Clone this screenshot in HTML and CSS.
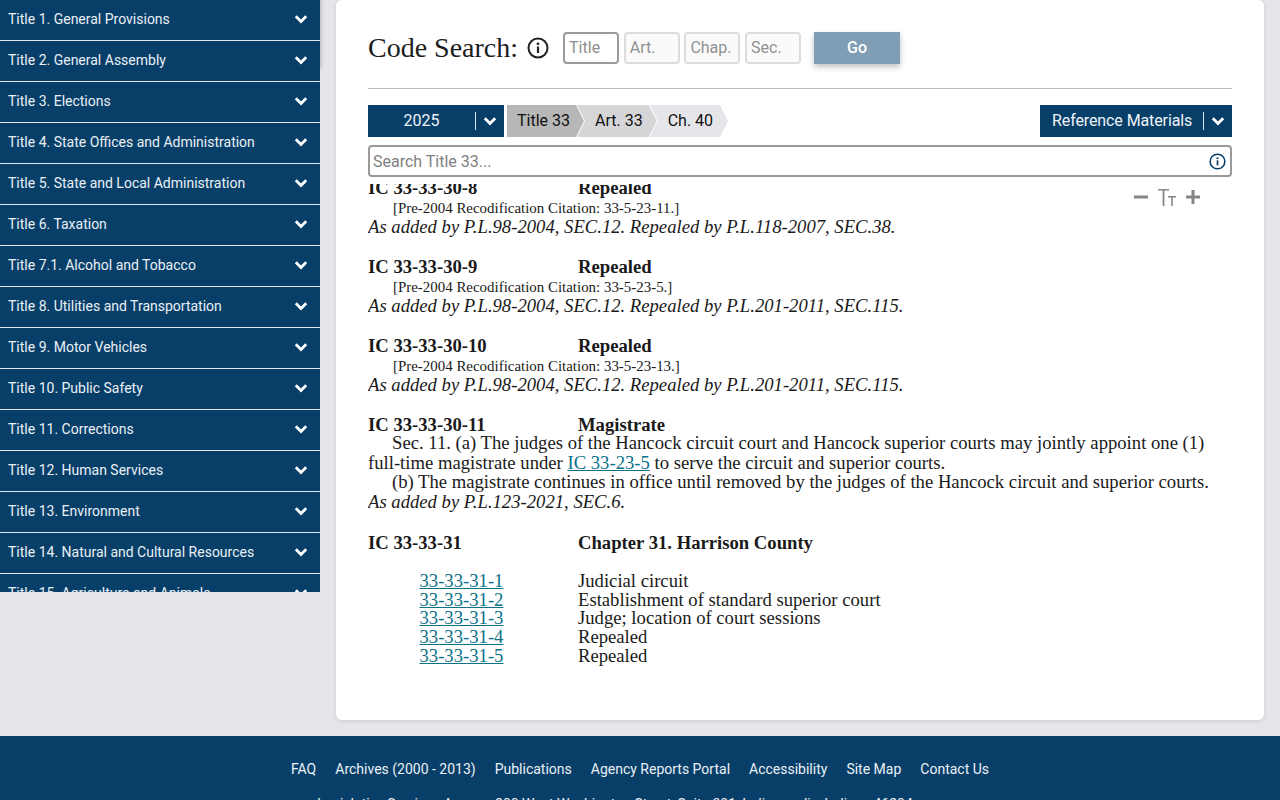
FILE: index.html
```html
<!DOCTYPE html>
<html lang="en">
<head>
    <meta charset="UTF-8">
    <meta name="viewport" content="width=device-width, initial-scale=1.0">
    <title>Indiana Code</title>
    <link rel="stylesheet" href="styles.css">
</head>
<body>
    <svg class="icon-defs" width="0" height="0">
        <symbol id="chev" viewBox="0 0 14 10">
            <path d="M1.8 2.2 7 7.4l5.2-5.2" fill="none" stroke="currentColor" stroke-width="2.8"/>
        </symbol>
        <symbol id="info" viewBox="0 0 22 22">
            <circle cx="11" cy="11" r="9.5" fill="none" stroke="currentColor" stroke-width="2"/>
            <rect x="9.9" y="9.5" width="2.2" height="6.5" fill="currentColor"/>
            <circle cx="11" cy="6.8" r="1.4" fill="currentColor"/>
        </symbol>
    </svg>

    <div class="page">
        <nav class="sidebar">
            <div class="nav-item"><span>Title 1. General Provisions</span><svg class="chev"><use href="#chev"/></svg></div>
            <div class="nav-item"><span>Title 2. General Assembly</span><svg class="chev"><use href="#chev"/></svg></div>
            <div class="nav-item"><span>Title 3. Elections</span><svg class="chev"><use href="#chev"/></svg></div>
            <div class="nav-item"><span>Title 4. State Offices and Administration</span><svg class="chev"><use href="#chev"/></svg></div>
            <div class="nav-item"><span>Title 5. State and Local Administration</span><svg class="chev"><use href="#chev"/></svg></div>
            <div class="nav-item"><span>Title 6. Taxation</span><svg class="chev"><use href="#chev"/></svg></div>
            <div class="nav-item"><span>Title 7.1. Alcohol and Tobacco</span><svg class="chev"><use href="#chev"/></svg></div>
            <div class="nav-item"><span>Title 8. Utilities and Transportation</span><svg class="chev"><use href="#chev"/></svg></div>
            <div class="nav-item"><span>Title 9. Motor Vehicles</span><svg class="chev"><use href="#chev"/></svg></div>
            <div class="nav-item"><span>Title 10. Public Safety</span><svg class="chev"><use href="#chev"/></svg></div>
            <div class="nav-item"><span>Title 11. Corrections</span><svg class="chev"><use href="#chev"/></svg></div>
            <div class="nav-item"><span>Title 12. Human Services</span><svg class="chev"><use href="#chev"/></svg></div>
            <div class="nav-item"><span>Title 13. Environment</span><svg class="chev"><use href="#chev"/></svg></div>
            <div class="nav-item"><span>Title 14. Natural and Cultural Resources</span><svg class="chev"><use href="#chev"/></svg></div>
            <div class="nav-item"><span>Title 15. Agriculture and Animals</span><svg class="chev"><use href="#chev"/></svg></div>
        </nav>

        <main class="card">
            <div class="search-row">
                <h1>Code Search:</h1>
                <svg class="info-big"><use href="#info"/></svg>
                <div class="code-inputs">
                    <input class="code-input active" placeholder="Title">
                    <input class="code-input" placeholder="Art.">
                    <input class="code-input" placeholder="Chap.">
                    <input class="code-input" placeholder="Sec.">
                </div>
                <button class="go">Go</button>
            </div>

            <div class="toolbar">
                <div class="drop year"><span class="drop-label">2025</span><i class="sep"></i><svg class="chev"><use href="#chev"/></svg></div>
                <div class="crumbs">
                    <a class="crumb c1">Title 33</a>
                    <a class="crumb c2">Art. 33</a>
                    <a class="crumb c3">Ch. 40</a>
                </div>
                <div class="drop refs"><span class="drop-label">Reference Materials</span><i class="sep"></i><svg class="chev"><use href="#chev"/></svg></div>
            </div>

            <div class="text-search">
                <input placeholder="Search Title 33...">
                <svg class="info-small"><use href="#info"/></svg>
            </div>

            <div class="code-view">
                <div class="font-tools">
                    <svg width="16" height="16" viewBox="0 0 16 16"><rect x="1" y="6.5" width="14" height="3" fill="currentColor"/></svg>
                    <svg width="20" height="20" viewBox="0 0 20 20"><path d="M1 2h11v1.600H7.400V19H5.600V3.600H1zM11 9h8v1.400h-3.200V19h-1.600v-8.600H11z" fill="currentColor"/></svg>
                    <svg width="16" height="16" viewBox="0 0 16 16"><path d="M6.500 1h3v5.500H15v3H9.500V15h-3V9.500H1v-3h5.500z" fill="currentColor"/></svg>
                </div>
                <div class="code-text">
                    <div class="sec-head"><b>IC 33-33-30-8</b><b>Repealed</b></div>
                    <div class="cite">[Pre-2004 Recodification Citation: 33-5-23-11.]</div>
                    <div class="hist">As added by P.L.98-2004, SEC.12. Repealed by P.L.118-2007, SEC.38.</div>

                    <div class="sec-head gap"><b>IC 33-33-30-9</b><b>Repealed</b></div>
                    <div class="cite">[Pre-2004 Recodification Citation: 33-5-23-5.]</div>
                    <div class="hist">As added by P.L.98-2004, SEC.12. Repealed by P.L.201-2011, SEC.115.</div>

                    <div class="sec-head gap"><b>IC 33-33-30-10</b><b>Repealed</b></div>
                    <div class="cite">[Pre-2004 Recodification Citation: 33-5-23-13.]</div>
                    <div class="hist">As added by P.L.98-2004, SEC.12. Repealed by P.L.201-2011, SEC.115.</div>

                    <div class="sec-head tight"><b>IC 33-33-30-11</b><b>Magistrate</b></div>
                    <p class="para">Sec. 11. (a) The judges of the Hancock circuit court and Hancock superior courts may jointly appoint one (1) full-time magistrate under <a href="#">IC 33-23-5</a> to serve the circuit and superior courts.</p>
                    <p class="para">(b) The magistrate continues in office until removed by the judges of the Hancock circuit and superior courts.</p>
                    <div class="hist">As added by P.L.123-2021, SEC.6.</div>

                    <div class="sec-head chapter"><b>IC 33-33-31</b><b>Chapter 31. Harrison County</b></div>

                    <ul class="toc">
                        <li><a href="#">33-33-31-1</a><span>Judicial circuit</span></li>
                        <li><a href="#">33-33-31-2</a><span>Establishment of standard superior court</span></li>
                        <li><a href="#">33-33-31-3</a><span>Judge; location of court sessions</span></li>
                        <li><a href="#">33-33-31-4</a><span>Repealed</span></li>
                        <li><a href="#">33-33-31-5</a><span>Repealed</span></li>
                    </ul>
                </div>
            </div>
        </main>
    </div>

    <footer class="footer">
        <div class="footer-links">
            <a>FAQ</a>
            <a>Archives (2000 - 2013)</a>
            <a>Publications</a>
            <a>Agency Reports Portal</a>
            <a>Accessibility</a>
            <a>Site Map</a>
            <a>Contact Us</a>
        </div>
        <div class="footer-note">Legislative Services Agency, 200 West Washington Street, Suite 301, Indianapolis, Indiana 46204</div>
    </footer>
</body>
</html>
```

FILE: styles.css
```css
:root {
    --navy: #083f69;
    --page-bg: #e6e6ea;
    --link: #0b7189;
}

* {
    margin: 0;
    padding: 0;
    box-sizing: border-box;
}

html, body {
    height: 800px;
    overflow: hidden;
}

body {
    background: var(--page-bg);
    font-family: Roboto, sans-serif;
}

.icon-defs {
    position: absolute;
}

.page {
    position: relative;
    display: flex;
    align-items: flex-start;
    gap: 16px;
    height: 736px;
}

/* faint shadow at the top of the nav, under the sidebar itself */
.page::before {
    content: '';
    position: absolute;
    top: -6px;
    left: 0;
    width: 320px;
    height: 74px;
    box-shadow: 1px 0 4px rgba(0, 0, 0, 0.22);
}

/* left nav */
.sidebar {
    position: relative;
    width: 320px;
    height: 592px;
    overflow: hidden;
    flex-shrink: 0;
    background: var(--navy);
}

.nav-item {
    display: flex;
    justify-content: space-between;
    align-items: center;
    height: 41px;
    padding: 0 12px 3px 8px;
    border-bottom: 1px solid #dfe8ef;
    color: #eaf0f5;
    font-size: 14px;
}

.chev {
    width: 14px;
    height: 10px;
    color: #fff;
}

/* main card */
.card {
    position: relative;
    width: 928px;
    height: 720px;
    padding: 32px 32px 0;
    background: #fff;
    border-radius: 6px;
    box-shadow: 0 1px 4px rgba(0, 0, 0, 0.12);
}

.search-row {
    display: flex;
    align-items: center;
    height: 57px;
    padding-bottom: 25px;
    border-bottom: 1px solid #bcbcbc;
}

.search-row h1 {
    font-family: "Liberation Serif", serif;
    font-size: 28px;
    font-weight: 400;
    color: #1c1c1c;
}

.info-big {
    width: 22px;
    height: 22px;
    margin-left: 9px;
    color: #222;
}

.code-inputs {
    display: flex;
    gap: 4.67px;
    margin-left: 14px;
}

.code-input {
    width: 56px;
    height: 32px;
    padding: 0 4px;
    border: 2px solid #dcdcdc;
    border-radius: 4px;
    background: #fafafa;
    font: 16px Roboto, sans-serif;
}

.code-input.active {
    border-color: #9a9a9a;
    background: #fff;
}

.code-input::placeholder {
    color: #909090;
}

.go {
    width: 86px;
    height: 32px;
    margin-left: 13px;
    border: none;
    background: #7f9db5;
    color: #fff;
    font: 500 16px Roboto, sans-serif;
    box-shadow: 0 3px 6px rgba(0, 0, 0, 0.25);
}

/* year, breadcrumb, reference bar */
.toolbar {
    display: flex;
    align-items: center;
    height: 32px;
    margin-top: 16px;
}

.drop {
    display: flex;
    align-items: center;
    height: 32px;
    background: var(--navy);
    color: #eef3f7;
    font-size: 16px;
}

.drop-label {
    margin-top: -2px;
}

.year {
    width: 136px;
}

.year .drop-label {
    width: 107px;
    text-align: center;
}

.refs {
    margin-left: auto;
    width: 192px;
    padding-left: 12px;
}

.refs .drop-label {
    width: 151px;
    letter-spacing: -0.1px;
}

.sep {
    width: 1px;
    height: 18px;
    background: #dfe8ef;
}

.drop .chev {
    margin-left: 7px;
}

.crumbs {
    display: flex;
    margin-left: 3px;
    font-size: 16px;
    color: #111;
}

.crumb {
    display: block;
    height: 32px;
    line-height: 31px;
    clip-path: polygon(0 0, calc(100% - 8px) 0, 100% 50%, calc(100% - 8px) 100%, 0 100%, 8px 50%);
}

.c1 {
    padding: 0 14px 0 10px;
    background: #b7b7b7;
    clip-path: polygon(0 0, calc(100% - 8px) 0, 100% 50%, calc(100% - 8px) 100%, 0 100%);
}

.c2 {
    margin-left: -7px;
    padding: 0 14px 0 18px;
    background: #d6d6d8;
}

.c3 {
    margin-left: -7px;
    padding: 0 15px 0 18px;
    background: #e6e6ea;
}

.text-search {
    position: relative;
    margin-top: 8px;
}

.text-search input {
    display: block;
    width: 100%;
    height: 32px;
    padding: 0 3px;
    border: 2px solid #9a9a9a;
    border-radius: 4px;
    font: 16px Roboto, sans-serif;
}

.text-search input::placeholder {
    color: #808080;
}

.info-small {
    position: absolute;
    top: 8px;
    right: 6px;
    width: 17px;
    height: 17px;
    color: var(--navy);
}

/* code text, scrolled a little way down */
.code-view {
    position: relative;
    height: 489px;
    margin-top: 7px;
    overflow: hidden;
}

.font-tools {
    position: absolute;
    top: 3px;
    right: 31px;
    display: flex;
    align-items: center;
    gap: 8px;
    color: #868686;
}

.code-text {
    margin-top: -6px;
    font-family: "Liberation Serif", serif;
    font-size: 18.667px;
    line-height: 19.6px;
    color: #1a1a1a;
}

.code-text a {
    color: var(--link);
}

.sec-head {
    display: grid;
    grid-template-columns: 210px 1fr;
}

.sec-head.gap {
    margin-top: 20px;
}

.sec-head.tight {
    margin-top: 24px;
    line-height: 14.6px;
}

.sec-head.chapter {
    margin-top: 22px;
}

.cite {
    padding: 1.5px 0 0 25px;
    margin-bottom: -1.5px;
    font-size: 14.93px;
}

.hist {
    font-style: italic;
}

.para {
    text-indent: 24px;
}

.toc {
    margin-top: 19px;
    list-style: none;
    line-height: 18.75px;
}

.toc li {
    display: grid;
    grid-template-columns: 210px 1fr;
}

.toc a {
    padding-left: 51.5px;
}

/* footer */
.footer {
    height: 100px;
    padding-top: 24px;
    background: var(--navy);
    color: #eaf0f5;
    font-size: 14px;
    text-align: center;
}

.footer-links {
    display: flex;
    justify-content: center;
    gap: 19px;
    line-height: 18px;
}

.footer-note {
    margin-top: 18px;
    padding-right: 50px;
}
```
